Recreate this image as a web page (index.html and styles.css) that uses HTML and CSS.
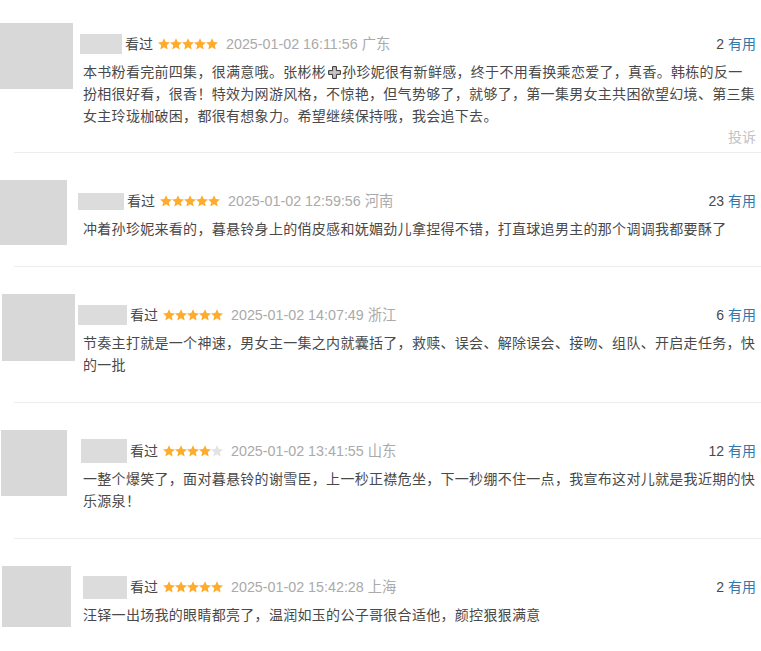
FILE: index.html
```html
<!DOCTYPE html>
<html lang="zh-CN">
<head>
<meta charset="utf-8">
<title>短评</title>
<link rel="stylesheet" href="styles.css">
</head>
<body>
<svg class="defs" width="0" height="0" aria-hidden="true">
  <defs>
    <symbol id="star" viewBox="0.2 0.3 11.6 11.2">
      <polygon points="6,0.3 7.7,4.05 11.8,4.45 8.7,7.2 9.6,11.3 6,9.15 2.4,11.3 3.3,7.2 0.2,4.45 4.3,4.05"/>
    </symbol>
  </defs>
</svg>

<div class="reviews">
  <article class="review review--reported">
    <div class="avatar" style="width:73px;height:66px;margin-left:0"></div>
    <div class="review-body">
      <div class="review-head">
        <span class="name" style="width:42px;height:20px;margin-left:-3px"></span>
        <span class="watched">看过</span>
        <span class="stars"><svg class="star on"><use href="#star"/></svg><svg class="star on"><use href="#star"/></svg><svg class="star on"><use href="#star"/></svg><svg class="star on"><use href="#star"/></svg><svg class="star on"><use href="#star"/></svg></span>
        <span class="meta">2025-01-02 16:11:56 广东</span>
        <span class="votes"><span class="count">2</span> <a class="useful">有用</a></span>
      </div>
      <p class="review-text">本书粉看完前四集，很满意哦。张彬彬<span class="plus"><svg viewBox="0 0 13 13"><path d="M4.6 0.6h3.8v4h4v3.8h-4v4H4.6v-4h-4V4.6h4z"/></svg></span>孙珍妮很有新鲜感，终于不用看换乘恋爱了，真香。韩栋的反一扮相很好看，很香！特效为网游风格，不惊艳，但气势够了，就够了，第一集男女主共困欲望幻境、第三集女主玲珑枷破困，都很有想象力。希望继续保持哦，我会追下去。</p>
      <div class="report">投诉</div>
    </div>
  </article>
  <div class="sep"></div>

  <article class="review">
    <div class="avatar" style="width:67px;height:65px;margin-left:0"></div>
    <div class="review-body">
      <div class="review-head">
        <span class="name" style="width:46px;height:17px;margin-left:-5px"></span>
        <span class="watched">看过</span>
        <span class="stars"><svg class="star on"><use href="#star"/></svg><svg class="star on"><use href="#star"/></svg><svg class="star on"><use href="#star"/></svg><svg class="star on"><use href="#star"/></svg><svg class="star on"><use href="#star"/></svg></span>
        <span class="meta">2025-01-02 12:59:56 河南</span>
        <span class="votes"><span class="count">23</span> <a class="useful">有用</a></span>
      </div>
      <p class="review-text">冲着孙珍妮来看的，暮悬铃身上的俏皮感和妩媚劲儿拿捏得不错，打直球追男主的那个调调我都要酥了</p>
    </div>
  </article>
  <div class="sep"></div>

  <article class="review">
    <div class="avatar" style="width:73px;height:67px;margin-left:2px"></div>
    <div class="review-body">
      <div class="review-head">
        <span class="name" style="width:49px;height:20px;margin-left:-5px"></span>
        <span class="watched">看过</span>
        <span class="stars"><svg class="star on"><use href="#star"/></svg><svg class="star on"><use href="#star"/></svg><svg class="star on"><use href="#star"/></svg><svg class="star on"><use href="#star"/></svg><svg class="star on"><use href="#star"/></svg></span>
        <span class="meta">2025-01-02 14:07:49 浙江</span>
        <span class="votes"><span class="count">6</span> <a class="useful">有用</a></span>
      </div>
      <p class="review-text">节奏主打就是一个神速，男女主一集之内就囊括了，救赎、误会、解除误会、接吻、组队、开启走任务，快的一批</p>
    </div>
  </article>
  <div class="sep"></div>

  <article class="review">
    <div class="avatar" style="width:66px;height:66px;margin-left:1px"></div>
    <div class="review-body">
      <div class="review-head">
        <span class="name" style="width:46px;height:24px;margin-left:-2px"></span>
        <span class="watched">看过</span>
        <span class="stars"><svg class="star on"><use href="#star"/></svg><svg class="star on"><use href="#star"/></svg><svg class="star on"><use href="#star"/></svg><svg class="star on"><use href="#star"/></svg><svg class="star off"><use href="#star"/></svg></span>
        <span class="meta">2025-01-02 13:41:55 山东</span>
        <span class="votes"><span class="count">12</span> <a class="useful">有用</a></span>
      </div>
      <p class="review-text">一整个爆笑了，面对暮悬铃的谢雪臣，上一秒正襟危坐，下一秒绷不住一点，我宣布这对儿就是我近期的快乐源泉！</p>
    </div>
  </article>
  <div class="sep"></div>

  <article class="review">
    <div class="avatar" style="width:69px;height:61px;margin-left:2px"></div>
    <div class="review-body">
      <div class="review-head">
        <span class="name" style="width:44px;height:23px;margin-left:0"></span>
        <span class="watched">看过</span>
        <span class="stars"><svg class="star on"><use href="#star"/></svg><svg class="star on"><use href="#star"/></svg><svg class="star on"><use href="#star"/></svg><svg class="star on"><use href="#star"/></svg><svg class="star on"><use href="#star"/></svg></span>
        <span class="meta">2025-01-02 15:42:28 上海</span>
        <span class="votes"><span class="count">2</span> <a class="useful">有用</a></span>
      </div>
      <p class="review-text">汪铎一出场我的眼睛都亮了，温润如玉的公子哥很合适他，颜控狠狠满意</p>
    </div>
  </article>
</div>
</body>
</html>
```

FILE: styles.css
```css
html, body {
  margin: 0;
  padding: 0;
  background: #fff;
}

body {
  font-family: "Liberation Sans", "Noto Sans CJK SC", sans-serif;
  color: #494949;
  font-size: 14px;
}

.defs {
  position: absolute;
  width: 0;
  height: 0;
  overflow: hidden;
}

.reviews {
  padding: 23px 5px 0 0;
}

.review {
  display: grid;
  grid-template-columns: 83px 1fr;
  align-items: start;
}

.sep + .review {
  margin-top: 27px;
}

.avatar {
  background: #d8d8d8;
}

.review-body {
  padding-top: 11px;
  padding-bottom: 26px;
  min-width: 0;
}

.review--reported .review-body {
  padding-bottom: 5px;
}

.review-head {
  display: flex;
  align-items: center;
  height: 20px;
  line-height: 20px;
}

.name {
  display: block;
  flex: none;
  background: #dcdcdc;
  margin-right: 3px;
}

.watched {
  font-size: 14px;
  color: #494949;
}

.stars {
  display: flex;
  margin-left: 5px;
  margin-right: 8px;
}

.star {
  width: 12px;
  height: 12px;
  display: block;
}

.star.on { fill: #ffac2d; }
.star.off { fill: #e3e3e3; }

.meta {
  color: #aaa;
  font-size: 14.3px;
}

.votes {
  margin-left: auto;
  font-size: 14px;
  color: #494949;
}

.useful {
  color: #3377aa;
  font-size: 14px;
  text-decoration: none;
  cursor: pointer;
}

.review-text {
  margin: 7px 0 0;
  font-size: 14px;
  line-height: 22px;
  letter-spacing: 0.3px;
  color: #494949;
}

.plus {
  display: inline-block;
  width: 16px;
  height: 14px;
  line-height: 14px;
  vertical-align: -2px;
  text-align: center;
}

.plus svg {
  width: 13px;
  height: 13px;
  fill: #c4c4c4;
  stroke: #333;
  stroke-width: 1;
}

.report {
  text-align: right;
  font-size: 14px;
  line-height: 20px;
  color: #c2c2c2;
}

.sep {
  margin-left: 14px;
  margin-right: -5px;
  border-top: 1px solid #ececec;
}
```
